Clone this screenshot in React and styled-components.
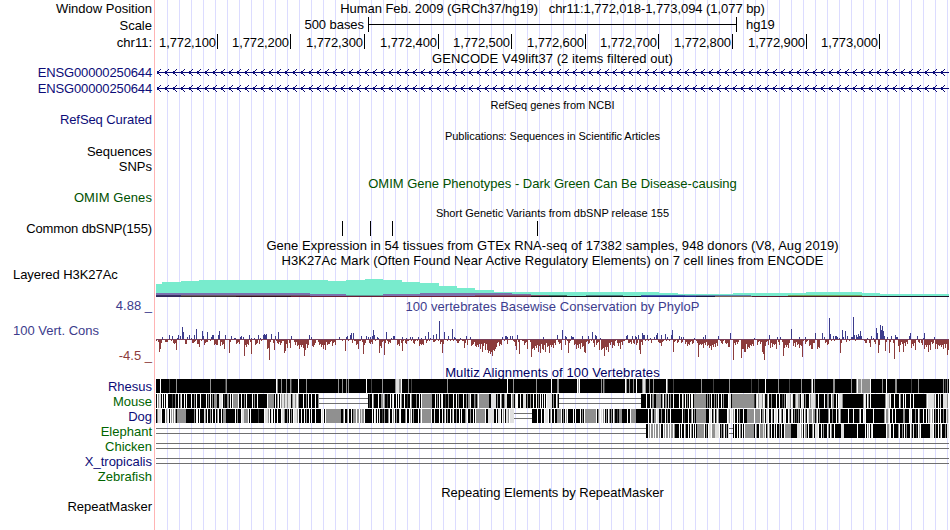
import React from 'react';
import styled, { createGlobalStyle } from 'styled-components';

const LEFT = 156;
const WIDTH = 793;

const INK = '#000';
const NAVY = '#0c0c78';
const GREEN = '#005000';
const LEAF = '#006400';
const BLUE = '#3c3c8c';
const RED = '#8c3c3c';

// base positions that get a label and a tick in the ruler
const ticks = [
	['1,772,100', 217],
	['1,772,200', 290],
	['1,772,300', 364],
	['1,772,400', 438],
	['1,772,500', 511],
	['1,772,600', 585],
	['1,772,700', 658],
	['1,772,800', 732],
	['1,772,900', 806],
	['1,773,000', 879],
];

const snps = [342, 370, 392, 537];

// [first x, top y] for each step of the H3K27Ac signal
const signal = [
	[156, 284], [162, 282], [181, 281], [199, 280], [328, 281], [346, 280],
	[365, 279], [383, 280], [402, 282], [420, 283], [439, 286], [457, 288],
	[475, 290], [494, 292], [659, 293], [678, 294], [733, 293], [806, 292],
	[862, 293], [880, 294],
];

// x, y, width, height, colour of the other cell lines under the signal
const layers = [
	[156, 293, 154, 2, '#7a70ae'],
	[310, 294, 36, 1, '#7a70ae'],
	[346, 295, 37, 1, '#5f9c98'],
	[383, 294, 37, 1, '#7a70ae'],
	[420, 293, 92, 2, '#7a70ae'],
	[512, 294, 19, 1, '#7a70ae'],
	[310, 295, 36, 1, '#7a70ae'],
	[383, 295, 92, 1, '#7a70ae'],
	[156, 295, 25, 1, '#3a3465'],
	[181, 295, 129, 1, '#6b5a68'],
	[475, 295, 74, 1, '#84566a'],
	[549, 295, 18, 1, '#3f7568'],
	[586, 295, 37, 1, '#4a7f84'],
	[641, 295, 44, 1, '#3e5fa8'],
	[685, 295, 66, 1, '#5b83ae'],
	[788, 295, 74, 1, '#6fa458'],
	[156, 296, 25, 1, '#33285a'],
	[181, 296, 55, 1, '#3c3030'],
	[236, 296, 55, 1, '#36101c'],
	[291, 296, 240, 1, '#6c1c34'],
	[531, 296, 110, 1, '#111114'],
	[641, 296, 55, 1, '#20207c'],
	[696, 296, 19, 1, '#1c1840'],
	[715, 296, 37, 1, '#7c6058'],
	[752, 296, 36, 1, '#57182c'],
	[788, 296, 92, 1, '#4c1c24'],
	[880, 296, 69, 1, '#1c1024'],
];

// conservation scores as "offset:height", offsets in thirds of a pixel
const up = [
	[155, '22:2 43:4 52:3 67:1 70:4 76:3 82:12 85:7 97:2 103:4 109:1 118:4 124:10 142:8 145:3 157:7 169:2 172:4 175:4 190:4 193:8 211:4 229:3 238:1 241:1 256:2 259:3 265:2 283:4 289:1 298:1 310:4 316:1 325:4 328:5 331:4 334:5 349:5 361:3 370:7 409:3 463:4 469:2 553:2 574:2 577:3 586:4 589:6 595:6 619:3 634:3 640:2 646:2 652:3 655:9 658:4 667:2 670:1 694:7 709:1 715:3 718:3 742:2 754:1 766:2 772:2 790:2'],
	[420, '4:1 16:3 25:7 31:1 40:4 49:5 58:18 73:7 85:3 97:10 103:2 106:1 121:1 139:3 151:2 247:2 256:3 259:3 262:2 271:3 277:3 292:4 370:2 412:4 427:9 436:3 439:2 454:3 457:2 460:2 487:3 505:3 517:7 526:4 529:3 541:1 619:3 622:4 637:3 646:3 649:2 655:4 667:6 670:4 673:4 682:4 691:1 703:2 709:4 712:6 724:4 736:5 742:2 754:4 757:9 778:3 784:2 790:2'],
	[685, '28:1 55:2 61:4 100:3 136:6 208:1 253:4 277:2 286:2 319:10 343:2 361:2 391:6 412:6 418:2 433:21 436:5 445:3 451:3 454:3 457:2 463:1 472:9 475:2 481:8 487:3 499:2 502:2 505:22 508:4 514:4 517:2 520:5 523:3 526:8 529:3 547:1 559:3 565:1 574:11 577:6 586:14 589:9 592:13 595:8 598:3 607:2 619:3 631:4 634:2 637:2 673:3 676:6 697:3 715:1 718:6 748:2'],
];
const down = [
	[155, '13:12 16:9 31:2 34:2 37:2 58:4 64:10 91:4 94:4 112:3 115:3 118:2 127:4 133:7 148:5 157:2 178:5 184:5 187:5 196:6 202:5 208:9 223:13 244:4 253:4 268:16 274:7 280:5 289:14 301:5 304:4 313:4 337:9 340:8 343:20 358:10 370:4 376:5 388:13 391:11 397:8 406:8 421:5 427:6 433:9 439:7 445:8 448:16 451:10 457:8 460:5 472:6 475:7 478:5 481:3 493:5 499:7 505:9 511:10 517:5 523:4 532:6 541:5 571:11 592:3 604:5 610:9 625:14 628:5 646:4 652:4 673:13 679:8 688:15 700:4 706:3 727:5 733:6 742:11 754:4 778:4 793:6 799:5 805:5'],
	[420, '10:5 19:3 40:2 61:4 67:13 70:4 115:3 133:8 142:5 154:6 157:5 160:4 166:6 169:7 175:7 181:9 187:12 190:6 196:10 202:10 205:13 208:11 211:14 214:12 217:16 220:10 223:11 226:9 229:7 238:6 244:5 262:4 286:6 289:10 298:14 313:5 322:9 334:17 337:9 343:10 349:8 355:12 361:13 367:9 370:10 376:12 382:7 388:13 394:7 400:8 406:5 418:4 424:10 436:5 445:13 463:5 469:9 475:8 481:9 487:7 493:12 496:13 505:4 523:7 529:5 538:10 544:10 547:9 553:16 559:10 565:12 571:5 577:8 583:6 595:6 601:9 607:5 625:3 634:4 643:4 649:5 658:10 661:14 667:5 694:3 718:3 724:6 760:12 772:3 784:3 796:4 802:5'],
	[685, '7:6 13:5 22:4 40:17 43:5 49:5 55:8 61:5 67:6 73:8 79:10 85:7 91:7 97:6 112:4 124:4 130:7 133:7 145:20 151:5 157:4 169:18 172:9 175:9 178:12 181:12 187:9 193:8 199:6 205:6 217:5 226:4 232:12 235:14 238:20 241:6 250:5 256:8 262:7 268:5 274:9 283:5 295:16 298:8 304:7 310:8 325:6 331:7 337:5 343:8 349:6 352:17 361:4 373:6 379:9 382:9 388:3 397:9 403:8 421:3 427:5 430:4 466:13 484:2 544:3 556:7 571:4 580:13 583:5 601:11 613:13 628:19 640:6 643:12 646:5 652:4 655:12 661:6 667:4 679:8 685:6 691:10 703:3 712:5 718:9 724:7 730:12 736:10 742:4 751:9 757:9 763:6 769:7 775:9 781:8 787:15 790:10'],
];

const readScores = (groups) => {
	const scores = Array(WIDTH).fill(0);
	groups.forEach(([start, list]) => {
		list.split(' ').forEach((item) => {
			const [offset, height] = item.split(':').map(Number);
			scores[start - LEFT + Math.floor(offset / 3)] = height;
		});
	});
	return scores;
};

const barPath = (scores, dir) =>
	scores
		.map((h, i) => (h ? `M${i + 0.5} ${dir > 0 ? 41 : 42}v${dir * (h + 1)}` : ''))
		.join('');

const upScores = readScores(up);
// bases without a listed score still dip a little when their neighbours do
const downScores = readScores(down).map((h, i, all) => {
	if (h || upScores[i]) return h;
	const near = Math.min(all[i - 1] || 0, all[i + 1] || 0);
	if (near) return Math.ceil(near * (0.4 + ((i * 7) % 5) / 10));
	const wide = Math.max(all[i - 1] || 0, all[i + 1] || 0);
	if (wide) return Math.min(3, (i * 7) % 4);
	return (i * 5) % 3 ? 0 : 1;
});

const shades = { w: '#fff', l: '#e0e0e0', g: '#909090', d: '#404040', k: '#000' };

// Rhesus is nearly solid: only the lighter columns are listed, as offset + shade + width
const rhesus =
	'4w1 13d1 20g1 54g1 69d1 70g1 120w1 121g1 125g1 130g1 134g1 135d1 142w1 150g1 182g1 186g1 190g1 192g1 210w1 215d1 226g1 239g1 240l3 243g2 245w1 252g1 255d1 291g1 351w1 357g1 380g1 395w1 401g2 421w1 422g1 423w1 445g1 447g1 448d1 469w1 470g1 473g1 477g1 480w1 486g1 487l2 489g1 493g1 497g1 510w1 511g1 517d1 545g1 557d1 573g1 595d1 602d1 609w1 622g1 633d1 645g1 655g1 656w1 658g1 677g2 695g1 700g1 701w1 702g3 705l1 706g8 714w1 726g1 730w1 739g2 755d1 762g1 787g1 789d1 791g1';

// Each part: offset in the track, then runs of shade + length,
// repeated until the next part starts
const mouse = [
	[0, 'k1w1g1l2k1w1k1w1k1w2k4d1k2g1k2w1k1g1w1k2w1k1w1k4w1k2g1k1w1k3w1k3w1k1'],
	[45, 'k5w1k1g1k1w1k1g1k1'],
	[58, 'g3k2l3w1k1d1k2g2k1w1k1w1'],
	[77, 'g5w1k2w1k2g1k1w1k5w1k1g1k2w1k1'],
	[102, 'k9w1g6k1w1k1g1w1k1g1'],
	[124, 'w1g1l2g1l2g1l3k1g1l2g1l1'],
	[143, 'k4w1k2g1k1w1k2w1k3w1k2g1w1'],
	[212, 'k1d1k2w1g1k4w1k2g2l1g1k2d1k2w1k1l1w1k2w1k1w1k1w1g1k2w1k1'],
	[259, 'k1g1k2w1k1w1'],
	[266, 'g10k3w1k1g1k1w1k1l1w1k2d1k2g1k4w1k2w1k1g1k4w1k2g1k1g2w1k3g1d1k1g1w1'],
	[335, 'l5k1g1k2w1g1k2g1l2k4w1g2k1l1w2k2w1k2l3k1g1k2g1k2w1k2w1k1g1k1w1k1w1k1w1k1w1'],
	[485, 'k5w1k3w1k1g2k2g5k1g1w1k1g2k1l1k1g1k2w1'],
	[524, 'k2w1g1k1w1k1g1k1w1k1w2'],
	[538, 'g12k1g1k1g1k1w1k2g1k1g1k1w1k2w1k1g1k4w1l2k1g2'],
	[582, 'g16d1k1l1w1'],
	[603, 'l3g1w1l1k2g1w1k2g1k4w1k2w1k2d1k1g1k1w1'],
	[639, 'g1l2g2k1w1l2k1g1k3w1'],
	[656, 'l3g1k2w1k5w1k2g2k2w1g2k2w1k1w1'],
	[689, 'k18g1w1l1k1w1g1k1w1'],
	[720, 'k9g1w1l2g1w1k3w1k4w1g1k2w1k1w1k4w1k2w1k3'],
	[774, 'l4g1w1k2w1k1l1k2'],
];

const dog = [
	[0, 'k1g1l3w1k3w1g1l1w1k1w1g1w1g1w1g1'],
	[22, 'g8k8g1k1w2k1w1k4l1g1k1w1k2g1k1w1k2w1k1g1w1k2w1k1g1'],
	[70, 'k9w1k1g1k3w1l2g4w1k1w1k3'],
	[101, 'k1d1k5w1'],
	[109, 'l3g1w1k1l1w1k1w1k2w1k3w1l2g1k2g1k1w1k1g1k1w1'],
	[143, 'k2w1k2w1k1g1k2w1k1w1k1'],
	[160, 'k5w1l1w1k1w1'],
	[170, 'g15k2g1w1k2g1w1k2w1k1'],
	[199, 'g1w1g2w1g1l1g2w1k7w1k1w1l1k1w1k1l1k2d1k1g1k1'],
	[230, 'k2g1w1k2w1g1w1k1g1k2l1w1k2'],
	[259, 'k3w1k1g1w1'],
	[266, 'g9w1k2l1k4w1k2w1k1g1w1k1g1k2w1k1g1w1k2g1k2w1k1w1k3g1l1w1k2g1k2w1k1w1'],
	[333, 'l5k2w1k1l2w1k1w1g1w1k1l2g1w1'],
	[376, 'k5w1k3w1k2w1l3w1k1g1w1k2w1'],
	[401, 'g4w1k1g1k1w1g1w1k5w1k1w1k4w1k1g1k1w1'],
	[433, 'g7w1k1g1l1w1l1w1g1w1k1g1k1w1g1k1g1k1w1g1k2d1k1'],
	[466, 'k5w1k2w1g5k12w1k2w1g1k1g2w1l2k2g1k3w1k1g1k2w1k5'],
	[524, 'k2w1k1d1k3w1k2g1w1k1g1'],
	[540, 'g10k3w1l1w1k1g1w1k1g1w1'],
	[563, 'k8w1l1g1w1l1w1g1w1k2w1k1g1k3w1'],
	[591, 'g7w1g5w1k1g2w1k1l2w1k2w1g1k1w1l2w1k1l2g1k1'],
	[624, 'w1g1k1w1l1w1k2w1g1k1l1w1k1g1k1d1k1g1k1w1g1w1k1'],
	[653, 'g3w1g2k1g1w1k1g1k1k7g1w1k2g1k3w1k1g1w1'],
	[685, 'k7w1k4w1k5g1w1k2w1l1w1'],
	[720, 'k8g1w1g2l1w1k2w1k2w1k7g2k4w1l1w1k3g1k2w1g1k3w1k2w1'],
	[772, 'l1g1l1w1g1w1k1g1k2w1k1w1k2g1k2'],
];

const elephant = [
	[490, 'k2w1g1w1g2w1g1w1g2w1g1w1k2w1g1w1g2w1g1w1g2w1g1k2'],
	[524, 'k1w1k2w1g1k2w1k1w1g1k1w1'],
	[541, 'g7w1k1g1k1w1l2w1'],
	[559, 'l4w1k1g1k1g1w1k1g1k1'],
	[577, 'k1w1k2w1k1w1g1k1w1'],
	[589, 'g9k1w1g1k2w1g3l1g1w1k1g1w1g1k1w1k2l1k1w1k2g1k1w1k2w1'],
	[635, 'k6l3w1g1w1k1w1g2k1w1k3g1w1k1l3w1k2w1k1g1k3w1g1k1w1g1k2w1'],
	[688, 'k13w1k7w1k1w1g1w1k1l1w1'],
	[720, 'k10w1g2l1w1k2w1k4g1w1k2g1k1w1k1g1k3w1g1k1l1k2d1k1w1g1w1'],
	[774, 'l3w1k1g1k2w1k1g1w1k3g1k1'],
];

// gaps are [offset, width], drawn as a double line
const species = [
	{ name: 'Rhesus', color: NAVY, marks: rhesus, gaps: [] },
	{ name: 'Mouse', color: LEAF, parts: mouse, gaps: [[163, 49], [403, 82]] },
	{ name: 'Dog', color: NAVY, parts: dog, gaps: [[358, 18]] },
	{ name: 'Elephant', color: LEAF, parts: elephant, gaps: [[0, 490], [573, 4]] },
	{ name: 'Chicken', color: LEAF, gaps: [[0, 793]] },
	{ name: 'X_tropicalis', color: NAVY, gaps: [[0, 793]] },
	{ name: 'Zebrafish', color: LEAF, gaps: [] },
];

const fromMarks = (marks) => [
	{ x: 0, w: WIDTH, fill: shades.k },
	...marks.split(' ').map((mark) => {
		const [, x, shade, w] = mark.match(/(\d+)([a-z])(\d+)/);
		return { x: Number(x), w: Number(w), fill: shades[shade] };
	}),
];

const fromParts = (parts, gaps) => {
	const rects = [];
	const stops = [...parts, ...gaps].map((p) => p[0]).concat(WIDTH);
	parts.forEach(([start, text]) => {
		const end = Math.min(...stops.filter((s) => s > start));
		const runs = text.match(/[a-z]\d+/g);
		for (let x = start, i = 0; x < end; i++) {
			const run = runs[i % runs.length];
			const w = Math.min(Number(run.slice(1)), end - x);
			rects.push({ x, w, fill: shades[run[0]] });
			x += w;
		}
	});
	return rects;
};

const Alignment = ({ marks, parts = [], gaps }) => {
	const rects = marks ? fromMarks(marks) : fromParts(parts, gaps);
	return (
		<Drawing width={WIDTH} height='15'>
			{rects.map((r, i) => (
				<rect key={i} x={r.x} y='0' width={r.w} height='14' fill={r.fill} />
			))}
			{gaps.map(([x, w]) => (
				<path key={x} d={`M${x} 4.5h${w}M${x} 9.5h${w}`} stroke='#707070' />
			))}
		</Drawing>
	);
};

const Gene = () => {
	let d = 'M1 7.5H793';
	for (let x = 0; x < WIDTH - 3; x += 8) {
		d += `M${x + 1} 6.5h2M${x + 1} 8.5h2M${x + 3} 5.5h1M${x + 3} 9.5h1M${x + 4} 4.5h1M${x + 4} 10.5h1`;
	}
	return (
		<Drawing width={WIDTH} height='16'>
			<path d={d} stroke={NAVY} />
		</Drawing>
	);
};

const Signal = () => (
	<Drawing width={WIDTH} height='29' viewBox='156 269 793 29'>
		{signal.map(([x, y], i) => {
			const next = signal[i + 1] ? signal[i + 1][0] : 949;
			return (
				<rect key={x} x={x} y={y} width={next - x} height={297 - y} fill='#78ebcd' />
			);
		})}
		{layers.map(([x, y, w, h, fill]) => (
			<rect key={`${x}-${y}`} x={x} y={y} width={w} height={h} fill={fill} />
		))}
	</Drawing>
);

const Conservation = () => (
	<Drawing width={WIDTH} height='66'>
		<path d={barPath(downScores, 1)} stroke={RED} />
		<path d={barPath(upScores, -1)} stroke={BLUE} />
		<path d='M0 41.5H793' stroke='#7a4058' />
	</Drawing>
);

const TitleRow = ({ height, small, color, spacing, drop, children }) => (
	<Row $h={height}>
		<Label />
		<Title $small={small} $color={color} $spacing={spacing} $drop={drop}>
			{children}
		</Title>
	</Row>
);

const LabelRow = ({ height, color, spacing, label, children }) => (
	<Row $h={height}>
		<Label $color={color} $spacing={spacing}>
			{label}
		</Label>
		<Track>{children}</Track>
	</Row>
);

const App = () => {
	return (
		<>
			<GlobalStyle />
			<Browser>
				<Row $h={17}>
					<Label>Window Position</Label>
					<Title $spacing={-0.055} $drop={-1}>
						Human Feb. 2009 (GRCh37/hg19) &nbsp; chr11:1,772,018-1,773,094 (1,077 bp)
					</Title>
				</Row>
				<LabelRow height={17} label='Scale'>
					<ScaleBar>
						<ScaleText>500 bases</ScaleText>
						<Drawing width='369' height='17'>
							<path d='M.5 0V15M368.5 0V15M0 7.5H369' stroke={INK} />
						</Drawing>
						<ScaleText>hg19</ScaleText>
					</ScaleBar>
				</LabelRow>
				<LabelRow height={17} label='chr11:'>
					<Ruler>
						{ticks.map(([text, x], i) => (
							<Tick key={text} $w={x + 1 - (i ? ticks[i - 1][1] + 1 : LEFT)}>
								{text}
							</Tick>
						))}
					</Ruler>
				</LabelRow>
				<TitleRow height={14} spacing={0.06} drop={2}>
					GENCODE V49lift37 (2 items filtered out)
				</TitleRow>
				<LabelRow height={16} color={NAVY} spacing={-0.14} label='ENSG00000250644'>
					<Gene />
				</LabelRow>
				<LabelRow height={16} color={NAVY} spacing={-0.14} label='ENSG00000250644'>
					<Gene />
				</LabelRow>
				<TitleRow height={16} small>
					RefSeq genes from NCBI
				</TitleRow>
				<LabelRow height={14} color={NAVY} spacing={-0.08} label='RefSeq Curated' />
				<TitleRow height={17} small spacing={-0.06} drop={2}>
					Publications: Sequences in Scientific Articles
				</TitleRow>
				<LabelRow height={15} label='Sequences' />
				<LabelRow height={16} label='SNPs' />
				<TitleRow height={17} color={GREEN}>
					OMIM Gene Phenotypes - Dark Green Can Be Disease-causing
				</TitleRow>
				<LabelRow height={12} color={GREEN} spacing={0.08} label='OMIM Genes' />
				<TitleRow height={17} small drop={1}>
					Short Genetic Variants from dbSNP release 155
				</TitleRow>
				<LabelRow height={16} spacing={-0.12} label='Common dbSNP(155)'>
					<Drawing width={WIDTH} height='16'>
						<path d={snps.map((x) => `M${x - LEFT + 0.5} 0v15`).join('')} stroke={INK} />
					</Drawing>
				</LabelRow>
				<TitleRow height={16} spacing={0.055} drop={2}>
					Gene Expression in 54 tissues from GTEx RNA-seq of 17382 samples, 948 donors (V8, Aug 2019)
				</TitleRow>
				<TitleRow height={16} spacing={0.05}>
					H3K27Ac Mark (Often Found Near Active Regulatory Elements) on 7 cell lines from ENCODE
				</TitleRow>
				<Row $h={29}>
					<SideLabel>Layered H3K27Ac</SideLabel>
					<Track>
						<Signal />
					</Track>
				</Row>
				<Row $h={66}>
					<Range>
						<Limit $color={BLUE}>4.88 _</Limit>
						<RangeName>100 Vert. Cons</RangeName>
						<Limit $color={RED}>-4.5 _</Limit>
					</Range>
					<Track>
						<PlotTitle>100 vertebrates Basewise Conservation by PhyloP</PlotTitle>
						<Conservation />
					</Track>
				</Row>
				<TitleRow height={15} color='#000064' spacing={0.1} drop={2}>
					Multiz Alignments of 100 Vertebrates
				</TitleRow>
				{species.map((s) => (
					<LabelRow key={s.name} height={15} color={s.color} label={s.name}>
						<Alignment marks={s.marks} parts={s.parts} gaps={s.gaps} />
					</LabelRow>
				))}
				<TitleRow height={17}>Repeating Elements by RepeatMasker</TitleRow>
				<LabelRow height={12} label='RepeatMasker' />
			</Browser>
		</>
	);
};

const GlobalStyle = createGlobalStyle`
	body {
		margin: 0;
		background: #fff;
	}
`;
const Browser = styled.div`
	width: 950px;
	height: 530px;
	overflow: hidden;
	font-family: 'Liberation Sans', Arial, sans-serif;
	font-size: 13px;
	color: ${INK};
	background:
		linear-gradient(#ffb4b4, #ffb4b4) 154px 0 / 1px 100% no-repeat,
		linear-gradient(#fff, #fff) 0 0 / 156px 100% no-repeat,
		repeating-linear-gradient(
			to right,
			transparent 0 11px,
			#dcdcff 11px 12px
		);
`;
const Row = styled.div`
	display: grid;
	grid-template-columns: 152px 793px;
	column-gap: 4px;
	height: ${(p) => p.$h}px;
	line-height: ${(p) => p.$h}px;
	white-space: nowrap;
`;
const Label = styled.div`
	text-align: right;
	color: ${(p) => p.$color || INK};
	letter-spacing: ${(p) => p.$spacing || 0}px;
`;
const SideLabel = styled.div`
	padding-left: 13px;
	line-height: 12px;
	letter-spacing: -0.05px;
`;
const Track = styled.div`
	min-width: 0;
`;
const Title = styled.div`
	margin-top: ${(p) => p.$drop / 2 || 0}px;
	text-align: center;
	font-size: ${(p) => (p.$small ? 11 : 13)}px;
	color: ${(p) => p.$color || INK};
	letter-spacing: ${(p) => p.$spacing || 0}px;
`;
const Drawing = styled.svg`
	display: block;
	flex: none;
	shape-rendering: crispEdges;
`;
const ScaleBar = styled.div`
	display: flex;
	width: 618px;
	justify-content: flex-end;
	gap: 4px;
	& > :last-child {
		width: 28px;
		margin-left: 5px;
	}
`;
const ScaleText = styled.span`
	line-height: 16px;
	letter-spacing: -0.05px;
`;
const Ruler = styled.div`
	display: flex;
`;
const Tick = styled.div`
	box-sizing: border-box;
	width: ${(p) => p.$w}px;
	height: 15px;
	padding-right: 1px;
	border-right: 1px solid ${INK};
	text-align: right;
	letter-spacing: -0.1px;
`;
const Range = styled.div`
	display: flex;
	flex-direction: column;
	justify-content: space-between;
	line-height: 16px;
`;
const Limit = styled.div`
	text-align: right;
	color: ${(p) => p.$color};
`;
const RangeName = styled.div`
	padding-left: 13px;
	color: ${BLUE};
`;
const PlotTitle = styled.div`
	height: 17px;
	margin-bottom: -17px;
	line-height: 17px;
	text-align: center;
	color: ${BLUE};
	letter-spacing: 0.04px;
`;

export default App;
